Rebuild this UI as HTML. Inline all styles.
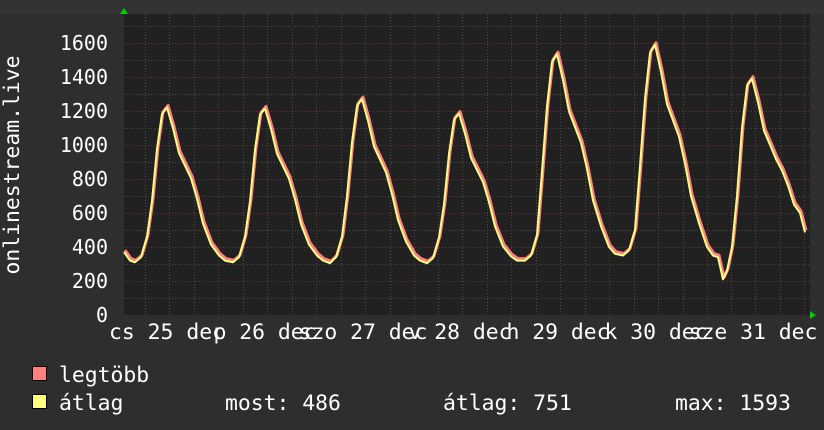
<!DOCTYPE html>
<html><head><meta charset="utf-8"><style>
html,body{margin:0;padding:0;background:#2e2e2e;width:824px;height:430px;overflow:hidden}
svg{display:block}
text{font-family:"DejaVu Sans Mono","Liberation Mono",monospace;font-size:20px;fill:#fff}
.lg text, text.lg{font-size:21.4px}
</style></head><body>
<svg width="824" height="430" xmlns="http://www.w3.org/2000/svg">
<rect x="0" y="0" width="824" height="430" fill="#2e2e2e"/>
<rect x="0" y="0" width="824" height="14" fill="#333"/>
<rect x="124" y="14" width="686" height="301" fill="#212121"/>
<g stroke="#4a4a4a" stroke-width="1" stroke-dasharray="1,2" fill="none">
<path d="M145.5 14V315M169.5 14V315M194.5 14V315M243.5 14V315M267.5 14V315M292.5 14V315M341.5 14V315M365.5 14V315M390.5 14V315M438.5 14V315M462.5 14V315M487.5 14V315M536.5 14V315M560.5 14V315M585.5 14V315M634.5 14V315M658.5 14V315M683.5 14V315M731.5 14V315M755.5 14V315M780.5 14V315"/>
<path d="M124 298.5H810M124 264.5H810M124 230.5H810M124 196.5H810M124 162.5H810M124 128.5H810M124 94.5H810M124 60.5H810M124 26.5H810"/>
</g>
<g stroke="#6a3535" stroke-width="1" stroke-dasharray="1,2" fill="none">
<path d="M218.5 14V318M316.5 14V318M414.5 14V318M511.5 14V318M609.5 14V318M707.5 14V318M804.5 14V318"/>
<path d="M124 281.5H810M124 247.5H810M124 213.5H810M124 179.5H810M124 145.5H810M124 111.5H810M124 77.5H810M124 43.5H810"/>
</g>
<polygon points="120,14 124,8 128,14" fill="#0c0"/>
<polygon points="810,311 816,315 810,319" fill="#0c0"/>
<g id="d">
<polyline id="ln" fill="none" stroke-linejoin="round" points="124,252.1 130,260.6 135,262.3 141,257.2 147,236.8 152,200.9 157,149.1 162,113.9 167,107.6 173,128.3 179,153.2 185,165.7 191,178.2 197,198.9 203,223.7 211,244.5 219,255.5 225,260.6 233,262.3 239,257.2 245,236.8 250,201.4 255,149.8 260,114.6 265,108.5 271,129 277,153.8 283,166.3 289,178.7 295,199.4 301,224.1 309,244.8 317,255.5 323,260.6 330,263.2 336,257.2 342,236.8 347,196.2 352,142.3 357,105.6 362,99.1 368,120.7 374,146.6 380,159.6 386,172.5 392,194.1 398,220 406,241.6 414,255.5 420,260.6 427,263.2 433,258.1 439,237.7 444,204.2 449,153.8 454,119.6 459,113.6 465,133.6 471,157.9 477,170 483,182.1 489,202.1 495,226.4 503,246.5 511,256.4 517,260.6 525,260.6 531,255.5 537,235.1 542,171.5 547,106.2 552,61.9 557,54.1 563,80.1 569,111.5 575,127.2 581,142.8 587,168.8 593,200.3 601,226.3 609,247 615,253.8 623,255.5 629,250.4 635,230 640,166.3 645,98.8 650,52.9 655,44.7 661,71.7 667,104.2 673,120.4 679,136.7 685,163.7 691,196 699,223.2 707,247 713,255.5 718,257.2 723,279.3 727,270.8 732,247 737,196 742,128 747,85.8 752,78.7 758,102.3 764,130.7 770,144.8 776,159.1 782,170.5 788,185.8 794,204.5 800,213 805,232.4"/>
</g>
<use href="#ln" stroke="#ff8080" stroke-width="3" transform="translate(1,-2)"/>
<use href="#ln" stroke="#ffff80" stroke-width="2"/>
<g text-anchor="end">
<text x="108" y="50">1600</text><text x="108" y="84">1400</text><text x="108" y="118">1200</text>
<text x="108" y="152">1000</text><text x="108" y="186">800</text><text x="108" y="220">600</text>
<text x="108" y="254">400</text><text x="108" y="288">200</text><text x="108" y="322">0</text>
</g>
<text class="lg" transform="translate(19,165) rotate(-90)" text-anchor="middle">onlinestream.live</text>
<g text-anchor="middle" class="lg">
<text x="167" y="339">cs 25 dec</text><text x="265" y="339">p 26 dec</text><text x="363" y="339">szo 27 dec</text>
<text x="460" y="339">v 28 dec</text><text x="558" y="339">h 29 dec</text><text x="656" y="339">k 30 dec</text>
<text x="753" y="339">sze 31 dec</text>
</g>
<rect x="32.5" y="366.5" width="14" height="14" fill="#ff8080" stroke="#000"/>
<rect x="32.5" y="394.5" width="14" height="14" fill="#ffff80" stroke="#000"/>
<g class="lg">
<text x="59" y="382">legtöbb</text>
<text x="59" y="410">átlag</text>
<text x="225" y="410">most: 486</text>
<text x="443" y="410">átlag: 751</text>
<text x="675" y="410">max: 1593</text>
</g>
</svg>
</body></html>
